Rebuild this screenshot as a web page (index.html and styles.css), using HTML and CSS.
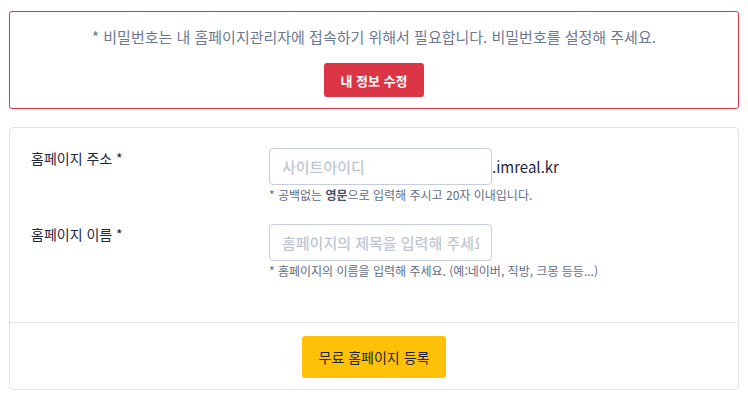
FILE: index.html
```html
<!DOCTYPE html>
<html lang="ko">

<head>
    <meta charset="UTF-8">
    <meta name="viewport" content="width=device-width, initial-scale=1.0">
    <title>무료 홈페이지 등록</title>
    <link rel="stylesheet" href="styles.css">
</head>

<body>

    <div class="notice-box">
        <p class="notice-text">* 비밀번호는 내 홈페이지관리자에 접속하기 위해서 필요합니다. 비밀번호를 설정해 주세요.</p>
        <button type="button" class="btn btn-danger">내 정보 수정</button>
    </div>

    <div class="card">
        <div class="card-body">
            <div class="form-row">
                <label for="siteId">홈페이지 주소 *</label>
                <div class="field">
                    <div class="input-line">
                        <input type="text" id="siteId" placeholder="사이트아이디">
                        <span class="suffix">.imreal.kr</span>
                    </div>
                    <p class="help">* 공백없는 <b>영문</b>으로 입력해 주시고 20자 이내입니다.</p>
                </div>
            </div>
            <div class="form-row">
                <label for="siteName">홈페이지 이름 *</label>
                <div class="field">
                    <div class="input-line">
                        <input type="text" id="siteName" placeholder="홈페이지의 제목을 입력해 주세요">
                    </div>
                    <p class="help">* 홈페이지의 이름을 입력해 주세요. (예:네이버, 직방, 크몽 등등...)</p>
                </div>
            </div>
        </div>
        <div class="card-footer">
            <button type="button" class="btn btn-warning">무료 홈페이지 등록</button>
        </div>
    </div>

</body>

</html>
```

FILE: styles.css
```css
body {
    font-family: 'Noto Sans CJK KR', 'Noto Sans', sans-serif;
    background-color: #fff;
    color: #1e2640;
    margin: 0;
    padding: 11px 9px;
}

.notice-box {
    border: 1px solid #dc3545;
    border-radius: 3px;
    padding: 13px 10px 11px;
    text-align: center;
    margin-bottom: 18px;
}

.notice-text {
    margin: 0 0 14px;
    font-size: 15px;
    line-height: 24px;
    color: #6e7891;
}

.btn {
    font-family: inherit;
    border: none;
    border-radius: 3px;
    cursor: pointer;
}

.btn-danger {
    background-color: #dc3545;
    color: #fff;
    font-size: 13px;
    font-weight: bold;
    width: 100px;
    height: 34px;
}

.btn-warning {
    background-color: #ffc107;
    color: #1e2640;
    font-size: 14px;
    width: 144px;
    height: 42px;
}

.card {
    border: 1px solid #e2e3ee;
    border-radius: 4px;
}

.card-body {
    padding: 20px 21px 42px;
}

.form-row {
    display: grid;
    grid-template-columns: 238px 1fr;
    margin-bottom: 20px;
}

.form-row:last-child {
    margin-bottom: 0;
}

.form-row label {
    font-size: 14px;
    line-height: 20px;
}

.input-line {
    display: flex;
    align-items: center;
}

.input-line input {
    width: 223px;
    height: 37px;
    box-sizing: border-box;
    padding: 0 12px;
    border: 1px solid #c6cedb;
    border-radius: 4px;
    font-family: inherit;
    font-size: 15px;
    font-weight: 500;
    color: #1e2640;
}

.input-line input::placeholder {
    color: #bfc7d3;
}

.suffix {
    font-size: 15px;
    color: #1e2640;
}

.help {
    margin: 1px 0 0;
    font-size: 12px;
    line-height: 18px;
    color: #636d84;
}

.help b {
    color: #4a5268;
}

.card-footer {
    border-top: 1px solid #e2e3ee;
    padding: 13px 0 11px;
    text-align: center;
}
```
